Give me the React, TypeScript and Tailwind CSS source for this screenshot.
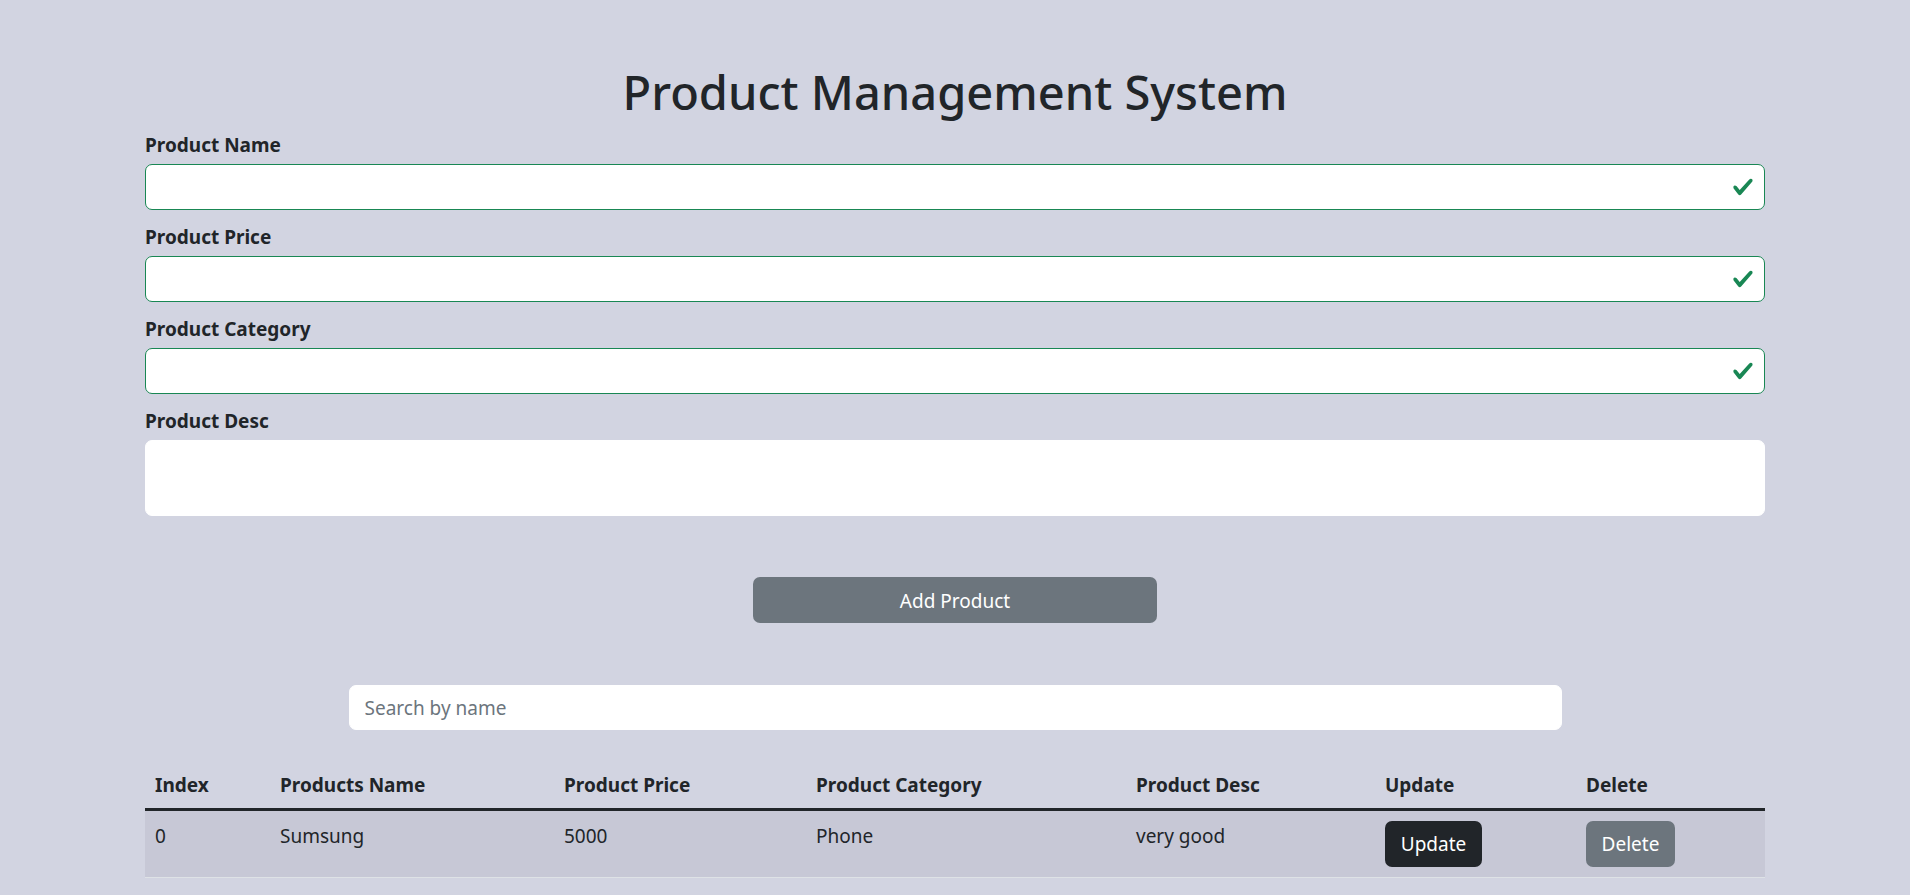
import { useState } from 'react';

type Product = { name: string; price: string; category: string; desc: string };

function CheckIcon() {
  return (
    <svg viewBox="0 0 8 8" className="absolute right-[11px] top-1/2 h-[22px] w-[22px] -translate-y-1/2 pointer-events-none">
      <path fill="#198754" d="M2.3 6.73.6 4.53c-.4-1.04.46-1.4 1.1-.8l1.1 1.4 3.4-3.8c.6-.63 1.6-.27 1.2.7l-4 4.6c-.43.5-.8.4-1.1.1z" />
    </svg>
  );
}

function Field({ label, value, onChange }: { label: string; value: string; onChange: (v: string) => void }) {
  return (
    <div className="mb-[12px]">
      <label className="block text-[19px] leading-[30px] font-bold mb-[4px]">{label}</label>
      <div className="relative">
        <input
          value={value}
          onChange={e => onChange(e.target.value)}
          className="block w-full h-[46px] rounded-[7px] border border-[#198754] bg-white px-[15px] pr-[48px] text-[19px] outline-none"
        />
        <CheckIcon />
      </div>
    </div>
  );
}

export default function App() {
  const [form, setForm] = useState<Product>({ name: '', price: '', category: '', desc: '' });
  const [search, setSearch] = useState('');
  const [products] = useState<Product[]>([{ name: 'Sumsung', price: '5000', category: 'Phone', desc: 'very good' }]);

  const shown = products.filter(p => p.name.toLowerCase().includes(search.toLowerCase()));

  return (
    <div className="min-h-screen bg-[#d2d4e1] text-[#212529] font-['Segoe_UI','Noto_Sans',sans-serif] pt-[62px] pb-10">
      <div className="w-[1620px] mx-auto">
        <h1 className="text-center text-[47px] leading-[60px] font-medium mb-[8px]">Product Management System</h1>

        <Field label="Product Name" value={form.name} onChange={v => setForm({ ...form, name: v })} />
        <Field label="Product Price" value={form.price} onChange={v => setForm({ ...form, price: v })} />
        <Field label="Product Category" value={form.category} onChange={v => setForm({ ...form, category: v })} />

        <div>
          <label className="block text-[19px] leading-[30px] font-bold mb-[4px]">Product Desc</label>
          <textarea
            rows={2}
            value={form.desc}
            onChange={e => setForm({ ...form, desc: e.target.value })}
            className="block w-full h-[76px] resize-none rounded-[7px] border border-white bg-white px-[15px] py-[7px] text-[19px] outline-none"
          />
        </div>

        <div className="flex justify-center mt-[61px]">
          <button className="w-[404px] h-[46px] pt-[2px] rounded-[7px] bg-[#6c757d] text-white text-[19px]">Add Product</button>
        </div>

        <div className="flex justify-center mt-[62px]">
          <input
            value={search}
            onChange={e => setSearch(e.target.value)}
            placeholder="Search by name"
            className="w-[1213px] h-[45px] rounded-[7px] border border-white bg-white px-[15px] text-[19px] outline-none placeholder:text-[#6c757d]"
          />
        </div>

        <table className="w-full mt-[28px] text-[19px] leading-[30px] border-collapse">
          <thead>
            <tr className="border-b-[3px] border-[#212529] text-left">
              <th className="w-[125px] px-[10px] pt-[12px] pb-[8px] font-bold">Index</th>
              <th className="w-[284px] px-[10px] pt-[12px] pb-[8px] font-bold">Products Name</th>
              <th className="w-[252px] px-[10px] pt-[12px] pb-[8px] font-bold">Product Price</th>
              <th className="w-[320px] px-[10px] pt-[12px] pb-[8px] font-bold">Product Category</th>
              <th className="w-[249px] px-[10px] pt-[12px] pb-[8px] font-bold">Product Desc</th>
              <th className="w-[201px] px-[10px] pt-[12px] pb-[8px] font-bold">Update</th>
              <th className="px-[10px] pt-[12px] pb-[8px] font-bold">Delete</th>
            </tr>
          </thead>
          <tbody>
            {shown.map((p, i) => (
              <tr key={i} className="bg-[#c7c8d6] border-b border-[#dee2e6] align-top">
                <td className="p-[10px]">{i}</td>
                <td className="p-[10px]">{p.name}</td>
                <td className="p-[10px]">{p.price}</td>
                <td className="p-[10px]">{p.category}</td>
                <td className="p-[10px]">{p.desc}</td>
                <td className="p-[10px]">
                  <button className="w-[97px] h-[46px] rounded-[7px] bg-[#212529] text-white">Update</button>
                </td>
                <td className="p-[10px]">
                  <button className="w-[89px] h-[46px] rounded-[7px] bg-[#6c757d] text-white">Delete</button>
                </td>
              </tr>
            ))}
          </tbody>
        </table>
      </div>
    </div>
  );
}
